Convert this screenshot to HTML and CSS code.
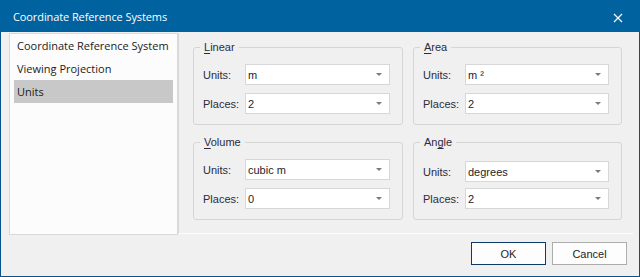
FILE: index.html
```html
<!DOCTYPE html>
<html>
<head>
<meta charset="utf-8">
<link rel="stylesheet" href="styles.css">
</head>
<body>
<div class="window">
  <div class="titlebar">
    <span class="title">Coordinate Reference Systems</span>
    <svg class="close" width="10" height="10" viewBox="0 0 10 10"><path d="M1 1 L9 9 M9 1 L1 9" stroke="#fff" stroke-width="1.2" fill="none"/></svg>
  </div>
  <div class="client">
    <div class="main">
      <ul class="nav">
        <li>Coordinate Reference System</li>
        <li>Viewing Projection</li>
        <li class="selected">Units</li>
      </ul>
      <div class="panel">
        <div class="groups">
          <fieldset class="group">
            <legend><u>L</u>inear</legend>
            <div class="fields">
              <div class="row"><span class="label">Units:</span><div class="combo"><span>m</span><i class="arrow"></i></div></div>
              <div class="row"><span class="label">Places:</span><div class="combo"><span>2</span><i class="arrow"></i></div></div>
            </div>
          </fieldset>
          <fieldset class="group">
            <legend><u>A</u>rea</legend>
            <div class="fields">
              <div class="row"><span class="label">Units:</span><div class="combo"><span>m ²</span><i class="arrow"></i></div></div>
              <div class="row"><span class="label">Places:</span><div class="combo"><span>2</span><i class="arrow"></i></div></div>
            </div>
          </fieldset>
          <fieldset class="group">
            <legend><u>V</u>olume</legend>
            <div class="fields">
              <div class="row"><span class="label">Units:</span><div class="combo"><span>cubic m</span><i class="arrow"></i></div></div>
              <div class="row"><span class="label">Places:</span><div class="combo"><span>0</span><i class="arrow"></i></div></div>
            </div>
          </fieldset>
          <fieldset class="group group-angle">
            <legend>An<u>g</u>le</legend>
            <div class="fields">
              <div class="row"><span class="label">Units:</span><div class="combo"><span>degrees</span><i class="arrow"></i></div></div>
              <div class="row"><span class="label">Places:</span><div class="combo"><span>2</span><i class="arrow"></i></div></div>
            </div>
          </fieldset>
        </div>
      </div>
    </div>
    <div class="buttons">
      <button class="btn btn-default">OK</button>
      <button class="btn">Cancel</button>
    </div>
  </div>
</div>
</body>
</html>
```
FILE: styles.css
```css
html, body {
  margin: 0;
  padding: 0;
  background: #f0f0f0;
}
.window {
  width: 640px;
  height: 277px;
  display: flex;
  flex-direction: column;
  background: #f0f0f0;
  overflow: hidden;
}
.titlebar {
  height: 32px;
  flex: 0 0 32px;
  box-sizing: border-box;
  background: #00629e;
  display: flex;
  align-items: center;
  justify-content: space-between;
  padding: 0 17px 0 13px;
  color: #fff;
  font-family: "Open Sans", "Noto Sans", sans-serif;
  font-size: 11px;
  letter-spacing: -0.1px;
}
.title {
  line-height: 16px;
  padding-top: 2px;
}
.close {
  display: block;
  margin-top: 3px;
}
.client {
  flex: 1;
  box-sizing: border-box;
  border: 1px solid #0c5289;
  border-top: 0;
  padding: 1px 6px 0 8px;
  display: flex;
  flex-direction: column;
}
.main {
  display: flex;
  height: 202px;
}
.nav {
  width: 169px;
  height: 202px;
  box-sizing: border-box;
  margin: 0;
  padding: 0 4px;
  list-style: none;
  background: #fcfcfc;
  border: 1px solid #d9d9d9;
  font-family: "Open Sans", "Noto Sans", sans-serif;
  font-size: 11px;
  color: #1b1b1b;
}
.nav li {
  height: 23px;
  line-height: 23px;
  padding-left: 3px;
  white-space: nowrap;
}
.nav li.selected {
  background: #c8c8c8;
}
.panel {
  width: 455px;
  height: 201px;
  box-sizing: border-box;
  border-left: 1px solid #d9d9d9;
  border-bottom: 1px solid #fdfdfd;
  padding: 7px 0 0 14px;
  background: #f0f0f0;
}
.groups {
  display: grid;
  grid-template-columns: 210px 209px;
  column-gap: 10px;
  row-gap: 10px;
}
.group {
  margin: 0;
  padding: 0 12px 10px 9px;
  border: 1px solid #d5d5d5;
  border-radius: 3px;
  min-width: 0;
  font-family: "Liberation Sans", Arial, sans-serif;
  font-size: 11px;
  color: #2c2c3a;
}
.group legend {
  margin-left: -3px;
  padding: 0 4px;
  line-height: 14px;
  height: 14px;
}
.group legend u {
  text-decoration-thickness: 1px;
  text-underline-offset: 2px;
}
.fields {
  display: flex;
  flex-direction: column;
  gap: 8px;
  padding-top: 10px;
}
.group-angle .fields {
  padding-top: 12px;
  gap: 6px;
}
.row {
  display: flex;
  align-items: center;
  height: 21px;
}
.label {
  width: 42px;
  flex: 0 0 42px;
}
.combo {
  flex: 1;
  height: 21px;
  box-sizing: border-box;
  background: #fff;
  border: 1px solid #d7d7d7;
  display: flex;
  align-items: center;
  justify-content: space-between;
  padding: 0 7px 0 2px;
  color: #1d1d2b;
}
.arrow {
  width: 0;
  height: 0;
  border-left: 3.5px solid transparent;
  border-right: 3.5px solid transparent;
  border-top: 3.5px solid #7a7a7a;
}
.buttons {
  display: flex;
  justify-content: flex-end;
  gap: 6px;
  padding: 7px 6px 0 0;
}
.btn {
  width: 75px;
  height: 23px;
  box-sizing: border-box;
  margin: 0;
  padding: 0;
  background: #fdfdfd;
  border: 1px solid #adadad;
  font-family: "Liberation Sans", Arial, sans-serif;
  font-size: 11px;
  color: #1d1d2b;
}
.btn-default {
  border-color: #0c3c66;
}
```
